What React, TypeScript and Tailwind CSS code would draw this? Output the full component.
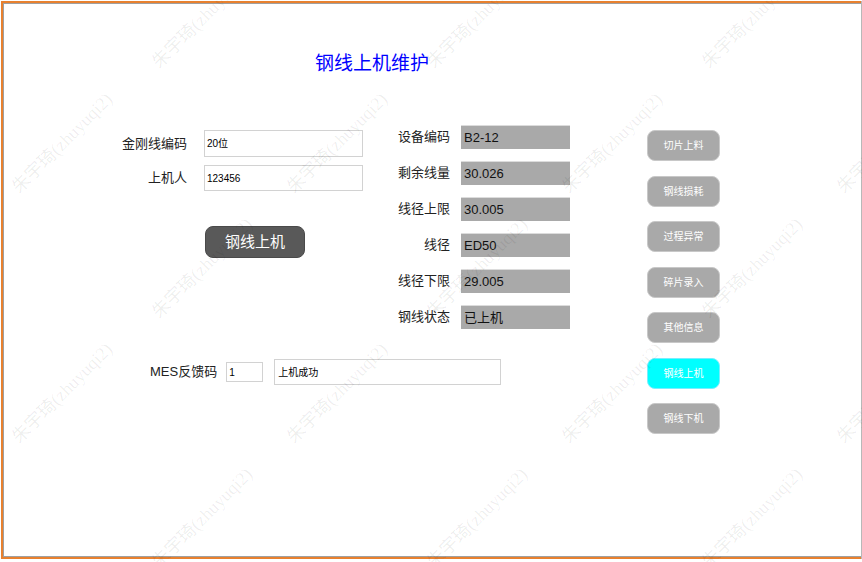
import React from 'react';

const FONT = { fontFamily: '"Liberation Sans", "Noto Sans CJK SC", sans-serif' };

const leftFields = [
  { label: '金刚线编码', value: '20位', cls: 'h-[27px]' },
  { label: '上机人', value: '123456', cls: 'h-[26px] mt-[8px]' },
];

const infoRows = [
  ['设备编码', 'B2-12'],
  ['剩余线量', '30.026'],
  ['线径上限', '30.005'],
  ['线径', 'ED50'],
  ['线径下限', '29.005'],
  ['钢线状态', '已上机'],
];

const sideButtons = ['切片上料', '钢线损耗', '过程异常', '碎片录入', '其他信息', '钢线上机', '钢线下机'];

// 水印：交错平铺，斜 45°
const marks: [number, number][] = [];
[70, 195, 320, 445, 570].forEach((y, r) => {
  const xs = r % 2 === 0 ? [-110, 165, 440, 715] : [25, 300, 575, 850];
  xs.forEach((x) => marks.push([x, y]));
});

export default function App() {
  return (
    <div className="relative w-[862px] h-[562px] bg-white overflow-hidden pt-[1px] pl-[1px]" style={FONT}>
      <div className="h-[558px] border-r border-[#b8b8b8]">
        <div className="h-full border-t-2 border-l-2 border-b-2 border-[#e8812f]">
          <div className="h-full border-t border-l border-b border-[#a0a0a0]">
            <div className="pt-[48px] pl-[311px] text-[19px] leading-[24px] text-[#0000ff]">钢线上机维护</div>

            <div className="flex mt-[49px] pl-[96px]">
              <div className="flex flex-col">
                <div className="flex">
                  {/* 左：录入 */}
                  <div className="w-[263px] flex flex-col pt-[5px]">
                    {leftFields.map((f) => (
                      <div key={f.label} className={`flex items-center ${f.cls}`}>
                        <div className="w-[87px] text-right text-[13px] text-[#222]">{f.label}</div>
                        <div className="ml-[17px] w-[159px] h-full border border-[#d2d2d2] flex items-center pl-[2px] text-[10px] text-black">
                          {f.value}
                        </div>
                      </div>
                    ))}
                    <button
                      type="button"
                      className="mt-[35px] ml-[105px] w-[100px] h-[32px] rounded-[8px] bg-[#595959] border border-[#4a4a4a] text-white text-[15px]"
                    >
                      钢线上机
                    </button>
                  </div>

                  {/* 中：只读信息 */}
                  <div className="ml-[27px] flex flex-col gap-[12px]">
                    {infoRows.map(([k, v]) => (
                      <div key={k} className="flex items-center h-[24px]">
                        <div className="w-[60px] text-right text-[13px] text-[#222]">{k}</div>
                        <div className="ml-[11px] w-[109px] h-full bg-[#a9a9a9] border-t border-[#dcdcdc] flex items-center pl-[3px] text-[13px] text-[#111]">
                          {v}
                        </div>
                      </div>
                    ))}
                  </div>
                </div>

                <div className="flex items-center mt-[30px] pl-[50px] h-[26px]">
                  <div className="text-[13px] text-[#222]">MES反馈码</div>
                  <div className="ml-[9px] w-[37px] h-[20px] border border-[#d2d2d2] flex items-center pl-[2px] text-[10px]">1</div>
                  <div className="ml-[11px] w-[227px] h-full border border-[#d2d2d2] flex items-center pl-[3px] text-[10px]">上机成功</div>
                </div>
              </div>

              {/* 右：功能按钮 */}
              <div className="ml-[77px] mt-[5px] flex flex-col gap-[14.5px]">
                {sideButtons.map((b) => (
                  <button
                    key={b}
                    type="button"
                    className={`w-[73px] h-[31px] rounded-[8px] text-white text-[10px] border ${
                      b === '钢线上机' ? 'bg-[#00ffff] border-[#7ef]' : 'bg-[#a9a9a9] border-[#c8c8c8]'
                    }`}
                  >
                    {b}
                  </button>
                ))}
              </div>
            </div>
          </div>
        </div>
      </div>

      <div className="absolute inset-0 pointer-events-none">
        {marks.map(([x, y]) => (
          <div
            key={`${x}-${y}`}
            className="absolute whitespace-nowrap text-[18px] text-black/[0.07] origin-bottom-left -rotate-45"
            style={{ left: x, top: y - 22, fontFamily: '"Liberation Serif", "Noto Sans CJK SC", serif' }}
          >
            朱宇琦(zhuyuqi2)
          </div>
        ))}
      </div>
    </div>
  );
}
